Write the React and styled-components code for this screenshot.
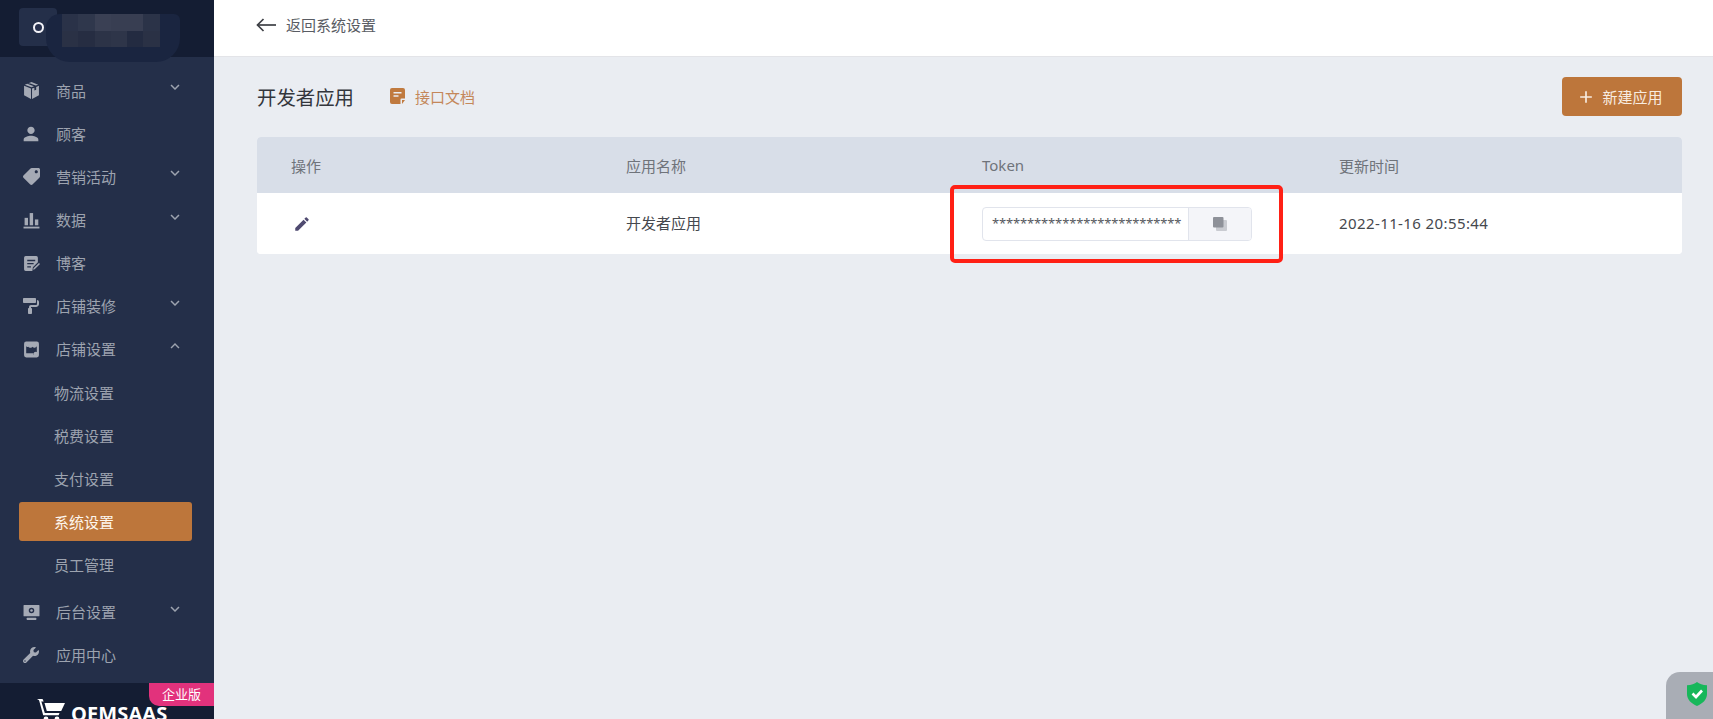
import React from 'react';
import styled, { createGlobalStyle } from 'styled-components';
import { MdPerson, MdEdit, MdExpandMore, MdExpandLess, MdAdd } from 'react-icons/md';
import { FaTag, FaPaintRoller, FaWrench } from 'react-icons/fa';

const FONT = `"Noto Sans", "Noto Sans CJK SC", sans-serif`;

const Global = createGlobalStyle`
  html, body { margin: 0; padding: 0; height: 100%; overflow: hidden; }
  body { font-family: ${FONT}; background: #eaedf2; }
  * { box-sizing: border-box; }
`;

const Page = styled.div`
  display: flex;
  width: 100vw;
  height: 100vh;
  overflow: hidden;
`;

const Sidebar = styled.aside`
  flex: 0 0 214px;
  display: flex;
  flex-direction: column;
  background: #242f49;
  height: 100%;
`;

const Brand = styled.div`
  position: relative;
  flex: 0 0 57px;
  background: #141d33;
  padding: 8px 0 0 19px;
`;

const LogoTile = styled.div`
  width: 38px;
  height: 38px;
  border-radius: 4px;
  background: #242f49;
  display: flex;
  align-items: center;
  justify-content: center;
`;

const LogoDot = styled.span`
  width: 11px;
  height: 11px;
  border-radius: 50%;
  border: 2.5px solid #f3f3f8;
  background: #27304d;
`;

const RedactSmear = styled.div`
  position: absolute;
  left: 46px;
  top: 14px;
  width: 134px;
  height: 48px;
  border-radius: 14px 6px 24px 24px;
  background: #1a2540;
`;

const Mosaic = styled.div`
  position: absolute;
  left: 62px;
  top: 14px;
  display: grid;
  grid-template-columns: repeat(6, 16.3px);
  grid-auto-rows: 16.5px;
`;

const MosaicCell = styled.i`
  display: block;
  background: ${p => p.$c};
`;

const Menu = styled.nav`
  flex: 1;
  padding-top: 12.2px;
  min-height: 0;
`;

const Row = styled.div`
  height: 43.1px;
  display: flex;
  align-items: center;
  padding-left: 24px;
  color: #9da3af;
  font-size: 15px;
`;

const RowIcon = styled.span`
  flex: 0 0 32px;
  height: 17px;
  display: flex;
  align-items: center;
  color: #a5aab5;
  svg { display: block; flex: none; width: ${p => p.$size || 17}px; height: ${p => p.$size || 17}px; margin-left: ${p => p.$nudge ?? -1}px; transform: ${p => (p.$flip ? 'scaleX(-1)' : 'none')}; }
`;

const RowLabel = styled.span`
  flex: 1;
  line-height: 20px;
`;

const Chevron = styled.span`
  flex: 0 0 auto;
  width: 18px;
  margin-right: 30px;
  display: flex;
  margin-top: -7px;
  color: #9da3af;
  svg { display: block; }
`;

const SubList = styled.div`
  padding-bottom: 4.5px;
`;

const SubRow = styled.div`
  height: 43.1px;
  display: flex;
  align-items: center;
  padding: 0 0 0 19px;
  font-size: 15px;
  color: ${p => (p.$active ? '#fdf6ee' : '#9da3af')};
`;

const SubInner = styled.div`
  width: 173px;
  height: 39px;
  display: flex;
  align-items: center;
  padding-left: 35px;
  border-radius: 3px;
  background: ${p => (p.$active ? '#bd763b' : 'transparent')};
`;

const Foot = styled.div`
  position: relative;
  flex: 0 0 36px;
  background: #141d33;
  overflow: hidden;
  display: flex;
  align-items: flex-start;
  padding: 16px 0 0 37px;
`;

const Edition = styled.span`
  position: absolute;
  right: 0;
  top: 0;
  width: 65px;
  height: 23px;
  border-bottom-left-radius: 10px;
  background: #e2327c;
  color: #fff;
  font-size: 13px;
  line-height: 23px;
  text-align: center;
`;

const FootMark = styled.span`
  display: flex;
  align-items: flex-start;
  gap: 6px;
  svg { flex: none; }
`;

const FootName = styled.span`
  color: #fff;
  font-family: "Open Sans", sans-serif;
  font-weight: 700;
  font-size: 20px;
  line-height: 26px;
  margin-top: 2px;
  letter-spacing: 0.1px;
`;

const Main = styled.main`
  flex: 1;
  min-width: 0;
  display: flex;
  flex-direction: column;
  position: relative;
`;

const TopBar = styled.header`
  flex: 0 0 57px;
  background: #fff;
  border-bottom: 1px solid #e3e4e8;
  display: flex;
  align-items: center;
  gap: 10px;
  padding: 0 0 7px 42px;
  color: #595c63;
  font-size: 15px;
  svg { display: block; }
`;

const Content = styled.div`
  flex: 1;
  padding: 19px 31px 0 43px;
`;

const HeadRow = styled.div`
  display: flex;
  align-items: center;
  height: 40px;
  margin-bottom: 21px;
`;

const Title = styled.h1`
  margin: 0;
  font-size: 19.4px;
  font-weight: 400;
  color: #33363c;
`;

const DocLink = styled.a`
  display: flex;
  align-items: center;
  gap: 10px;
  margin-left: 36px;
  font-size: 15px;
  color: #c4875a;
  svg { display: block; }
`;

const NewButton = styled.button`
  margin: 1px 0 0 auto;
  width: 120px;
  height: 39px;
  border: 0;
  border-radius: 4px;
  background: #bd763b;
  color: #f8ece0;
  font: 15px ${FONT};
  display: flex;
  align-items: center;
  justify-content: center;
  gap: 6px;
  padding: 0 5px 0 0;
  svg { display: block; }
`;

const Table = styled.div`
  border-radius: 4px;
  background: #fff;
`;

const Cols = styled.div`
  display: grid;
  grid-template-columns: 335px 356px 357px 1fr;
  align-items: center;
  height: ${p => p.$h}px;
  background: ${p => p.$bg};
  border-radius: ${p => p.$r};
`;

const HeadCell = styled.div`
  padding-left: 34px;
  font-size: 15px;
  color: #6f737a;
`;

const Cell = styled.div`
  position: relative;
  padding-left: ${p => p.$left ?? 34}px;
  padding-bottom: ${p => p.$raise ?? 0}px;
  font-size: 15px;
  letter-spacing: ${p => p.$track ?? 0}px;
  color: #45484e;
  svg { display: block; }
`;

const TokenGroup = styled.div`
  display: flex;
  width: 270px;
  height: 34px;
  border: 1px solid #e1e4ec;
  border-radius: 4px;
  overflow: hidden;
`;

const TokenValue = styled.div`
  width: 205px;
  flex: none;
  padding-left: 9px;
  line-height: 31px;
  font-size: 13px;
  letter-spacing: -0.15px;
  color: #54575d;
  white-space: nowrap;
`;

const CopyButton = styled.div`
  flex: 1;
  background: #f4f5f9;
  border-left: 1px solid #e1e4ec;
  display: flex;
  align-items: center;
  justify-content: center;
`;

const Highlight = styled.div`
  position: absolute;
  left: 2px;
  top: -22px;
  width: 333px;
  height: 78px;
  border: 4px solid #ff2015;
  border-radius: 5px;
  pointer-events: none;
`;

const Widget = styled.div`
  position: absolute;
  right: 0;
  bottom: 0;
  width: 47px;
  height: 47px;
  background: #a9adb5;
  border-top-left-radius: 14px;
  display: flex;
  padding: 10px 0 0 21px;
  svg { display: block; }
`;

const BoxIcon = () => (
  <svg viewBox="0 0 16 16" fill="currentColor">
    <path d="M8 0 1.700 2.500 8 5 10.300 4.100 4 1.600 5.700.9 12 3.400 14.300 2.500z" />
    <path d="M1 3.600v8.900L7.500 16V6.100L1 3.600z" />
    <path d="M15 3.600l-2.600 1v2.700l-1.700.7V5.300L8.500 6.100V16l6.500-3.500V3.600z" />
  </svg>
);
const ChartIcon = () => (
  <svg viewBox="0 0 16 16" fill="currentColor">
    <rect x="1.500" y="5.500" width="3.200" height="7" />
    <rect x="6.300" y="1" width="3.200" height="11.500" />
    <rect x="11.200" y="7" width="3.200" height="5.500" />
    <rect x="0.500" y="13.800" width="15" height="1.700" />
  </svg>
);
const BlogIcon = () => (
  <svg viewBox="0 0 16 16" fill="currentColor">
    <path fillRule="evenodd" d="M2.500 1h10A1.500 1.500 0 0 1 14 2.500v4.300L9.300 11.500 8.800 15H2.500A1.500 1.500 0 0 1 1 13.500v-11A1.500 1.500 0 0 1 2.500 1zM4 4.500v1.300h7.500V4.500H4zm0 3v1.300h6V7.500H4zm0 3v1.300h3.500v-1.300H4z" />
    <path d="M15 7.500l1 1-5 5-1.500.4.400-1.500z" />
  </svg>
);
const StoreIcon = () => (
  <svg viewBox="0 0 16 16" fill="currentColor">
    <path fillRule="evenodd" d="M3 .5h10a2 2 0 0 1 2 2v11a2 2 0 0 1-2 2H3a2 2 0 0 1-2-2v-11a2 2 0 0 1 2-2zM3 5v6.500h7V13h3v-1.500V5c-.5.8-1.200 1.300-2 1.300S9.500 5.800 9 5.300C8.500 5.800 7.800 6.300 7 6.300S5.500 5.800 5 5.300C4.500 5.800 3.800 6 3 5z" />
    <circle cx="12" cy="12" r="2" />
  </svg>
);
const MonitorIcon = () => (
  <svg viewBox="0 0 16 16" fill="currentColor">
    <path fillRule="evenodd" d="M1 1h14a.5.5 0 0 1 .5.5V11a.5.5 0 0 1-.5.5H1a.5.5 0 0 1-.5-.5V1.500A.5.5 0 0 1 1 1zm7 2.600a2.600 2.600 0 1 0 0 5.200 2.600 2.600 0 0 0 0-5.200z" />
    <circle cx="8" cy="6.200" r="1.200" />
    <rect x="3.500" y="13" width="9" height="2" rx=".5" />
  </svg>
);
const BackArrow = () => (
  <svg width="20" height="14" viewBox="0 0 20 14" fill="none" stroke="#3d3f45" strokeWidth="1.700">
    <path d="M20 7H1.500" />
    <path d="M7.500 1 1.500 7l6 6" />
  </svg>
);
const DocIcon = () => (
  <svg width="15" height="16" viewBox="0 0 15 16" fill="#c07a3f">
    <path fillRule="evenodd" d="M2 0h11a2 2 0 0 1 2 2v8.500H11.500a1 1 0 0 0-1 1V16H2a2 2 0 0 1-2-2V2a2 2 0 0 1 2-2zm1.500 4v1.500h8V4h-8zm0 3.200v1.500h5V7.200h-5z" />
    <path d="M12 12h3l-3 4z" />
  </svg>
);
const CopyIcon = () => (
  <svg width="14" height="14" viewBox="0 0 14 14">
    <rect x="3" y="3" width="11" height="11" rx="1" fill="#c9cbd1" />
    <rect x="0" y="0" width="10.500" height="10.500" rx="1" fill="#8e9199" />
  </svg>
);
const CartIcon = () => (
  <svg width="28" height="24" viewBox="0 0 28 24" fill="#fff">
    <path d="M0 0h5.500l1.200 2.600H4.200z" />
    <path d="M3.600 0 7.800 14h14.700l-.9 2.300H6.200L2 1z" />
    <path d="M7.500 4H28l-3.800 8H9.800z" />
    <circle cx="9" cy="20" r="2.400" />
    <circle cx="20" cy="20" r="2.400" />
  </svg>
);
const ShieldIcon = () => (
  <svg width="20" height="24" viewBox="0 0 20 24">
    <path fill="#17b75a" d="M10 0c2.200 2 5.800 3.100 10 3.300v8.700c0 5.500-4.200 9.500-10 12C4.200 21.500 0 17.500 0 12V3.300C4.200 3.100 7.800 2 10 0z" />
    <path d="M5.500 11.500 9 15l6-6.500" stroke="#fff" strokeWidth="2.600" fill="none" />
  </svg>
);

const mosaic = [
  '#2a3248', '#2f374c', '#3a4054', '#383e52', '#383e52', '#2b3348',
  '#2a3145', '#262d42', '#2c3347', '#2e3549', '#232b41', '#2a3145',
];

const Item = ({ icon, label, open, chevron, size, nudge, flip }) => (
  <Row>
    <RowIcon $size={size} $nudge={nudge} $flip={flip}>{icon}</RowIcon>
    <RowLabel>{label}</RowLabel>
    {chevron && (
      <Chevron>{open ? <MdExpandLess size={18} /> : <MdExpandMore size={18} />}</Chevron>
    )}
  </Row>
);

const Sub = ({ label, active }) => (
  <SubRow $active={active}>
    <SubInner $active={active}>{label}</SubInner>
  </SubRow>
);

export default function App() {
  return (
    <Page>
      <Global />
      <Sidebar>
        <Brand>
          <LogoTile><LogoDot /></LogoTile>
          <RedactSmear />
          <Mosaic>
            {mosaic.map((c, i) => <MosaicCell key={i} $c={c} />)}
          </Mosaic>
        </Brand>
        <Menu>
          <Item icon={<BoxIcon />} label="商品" chevron />
          <Item icon={<MdPerson />} label="顾客" size={22} nudge={-4} />
          <Item icon={<FaTag />} label="营销活动" chevron flip />
          <Item icon={<ChartIcon />} label="数据" chevron />
          <Item icon={<BlogIcon />} label="博客" />
          <Item icon={<FaPaintRoller />} label="店铺装修" chevron size={16} />
          <Item icon={<StoreIcon />} label="店铺设置" chevron open />
          <SubList>
            <Sub label="物流设置" />
            <Sub label="税费设置" />
            <Sub label="支付设置" />
            <Sub label="系统设置" active />
            <Sub label="员工管理" />
          </SubList>
          <Item icon={<MonitorIcon />} label="后台设置" chevron />
          <Item icon={<FaWrench />} label="应用中心" size={16} />
        </Menu>
        <Foot>
          <Edition>企业版</Edition>
          <FootMark>
            <CartIcon />
            <FootName>OEMSAAS</FootName>
          </FootMark>
        </Foot>
      </Sidebar>
      <Main>
        <TopBar>
          <BackArrow />
          返回系统设置
        </TopBar>
        <Content>
          <HeadRow>
            <Title>开发者应用</Title>
            <DocLink><DocIcon />接口文档</DocLink>
            <NewButton><MdAdd size={20} />新建应用</NewButton>
          </HeadRow>
          <Table>
            <Cols $h={56} $bg="#d8dee8" $r="4px 4px 0 0">
              <HeadCell>操作</HeadCell>
              <HeadCell>应用名称</HeadCell>
              <HeadCell>Token</HeadCell>
              <HeadCell>更新时间</HeadCell>
            </Cols>
            <Cols $h={61} $bg="#fff" $r="0 0 4px 4px">
              <Cell $left={36}><MdEdit size={18} color="#4f4a70" /></Cell>
              <Cell $raise={2}>开发者应用</Cell>
              <Cell>
                <TokenGroup>
                  <TokenValue>{'*'.repeat(27)}</TokenValue>
                  <CopyButton><CopyIcon /></CopyButton>
                </TokenGroup>
                <Highlight />
              </Cell>
              <Cell $track={0.4} $raise={1}>2022-11-16 20:55:44</Cell>
            </Cols>
          </Table>
        </Content>
        <Widget><ShieldIcon /></Widget>
      </Main>
    </Page>
  );
}
